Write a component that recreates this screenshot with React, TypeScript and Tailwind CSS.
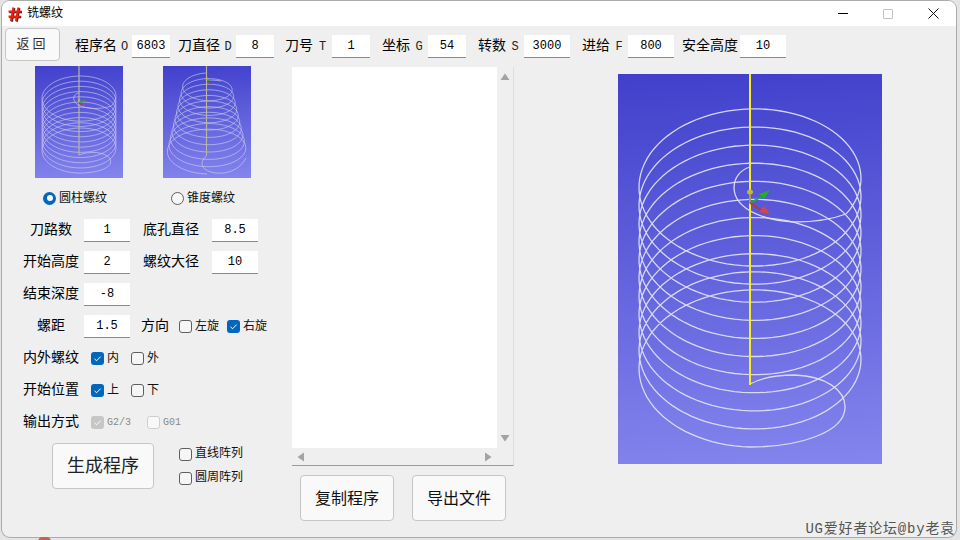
import React from 'react';

const FONT = "font-['Liberation_Mono','Noto_Sans_CJK_SC',monospace]";

// builds the helix polyline, angle in degrees, bottom of the ellipse is 90
const helixPath = (
  cx: number, rBottom: number, rTop: number,
  cyBottom: number, cyTop: number,
  ryBottom: number, ryTop: number,
  startDeg: number, endDeg: number,
) => {
  const pts: string[] = [];
  for (let a = startDeg; a <= endDeg; a += 4) {
    const t = (a - startDeg) / (endDeg - startDeg);
    const r = rBottom + (rTop - rBottom) * t;
    const ry = ryBottom + (ryTop - ryBottom) * t;
    const cy = cyBottom + (cyTop - cyBottom) * t;
    const rad = (a * Math.PI) / 180;
    pts.push(`${(cx + r * Math.cos(rad)).toFixed(2)} ${(cy + ry * Math.sin(rad)).toFixed(2)}`);
  }
  return 'M' + pts.join('L');
};

const cylinderCoil = helixPath(132, 111, 111, 299, 299 - (18.1 * 3900) / 360, 74, 74, 90, 3990);
const coneCoil = helixPath(44, 40, 24, 87, 19, 21, 12, 90, 3870);

const CylinderView = ({ main }: { main?: boolean }) => (
  <svg viewBox="0 0 264 390" preserveAspectRatio="none" className="block h-full w-full">
    <g fill="none" stroke={main ? '#dedef2' : '#cfcff2'} strokeOpacity={main ? 0.95 : 0.7} strokeWidth={main ? 1.3 : 0.9}>
      <path vectorEffect="non-scaling-stroke" d={cylinderCoil} />
      <path vectorEffect="non-scaling-stroke" d="M132 310C147 302 167 301 177 301C207 302 228 316 227 334C226 358 182 373 132 373" />
      <path vectorEffect="non-scaling-stroke" d="M228 140C212 146 192 148 177 148C152 147 117 138 116 114C116 104 122 96 132 93" />
    </g>
    <path vectorEffect="non-scaling-stroke" d="M132 0V118" stroke={main ? '#f6ee14' : '#b8b89c'} strokeWidth={main ? 2 : 1.2} />
    <path vectorEffect="non-scaling-stroke" d="M132 118V129" stroke={main ? '#a8a040' : '#b8b89c'} strokeWidth={main ? 2 : 1.2} />
    <path vectorEffect="non-scaling-stroke" d="M132 129V311" stroke={main ? '#f6ee14' : '#b8b89c'} strokeWidth={main ? 2 : 1.2} />
    <ellipse cx="132" cy="118" rx={main ? 3 : 4} ry={main ? 2.5 : 4} fill="#c8b830" />
    <g fill="none" strokeWidth={main ? 1.8 : 1.2}>
      <path vectorEffect="non-scaling-stroke" d="M132 129L143 123" stroke="#22b022" />
      <path vectorEffect="non-scaling-stroke" d="M132 129L143 136" stroke="#c03535" />
    </g>
    <path d="M141 120L152 116L146 125Z" fill="#22b022" />
    <path d="M141 138L152 140L146 132Z" fill="#d04848" />
  </svg>
);

const ConeView = () => (
  <svg viewBox="0 0 88 112" className="block h-full w-full">
    <g fill="none" stroke="#cfcff2" strokeOpacity="0.7" strokeWidth="0.9">
      <path d={coneCoil} />
      <path d="M43.5 90C37 95 37 103 48 106C58 109 75 107 83 92" />
      <path d="M44 14C48 14 52 14 58 15" />
    </g>
    <path d="M43.5 0V90" stroke="#b8b89c" strokeWidth="1.1" />
    <circle cx="43.5" cy="12" r="1" fill="#c8b830" />
    <path d="M44 15L49 13" stroke="#22b022" strokeWidth="1" />
    <path d="M44 15L48 18" stroke="#c03535" strokeWidth="1" />
  </svg>
);

const Box = ({ value, className }: { value: string; className: string }) => (
  <div className={`flex h-[23px] shrink-0 items-center justify-center border-b border-[#8a8a8a] bg-white text-[12px] text-black ${className}`}>
    {value}
  </div>
);

const Letter = ({ ch, className }: { ch: string; className: string }) => (
  <span className={`shrink-0 text-center text-[12px] text-[#222] ${className}`}>{ch}</span>
);

const Check = ({ on, off }: { on?: boolean; off?: boolean }) => {
  // off = greyed out box
  let cls = 'border border-[#5f5f5f] bg-[#f6f6f6]';
  if (on) cls = 'bg-[#0067c0]';
  if (off) cls = on ? 'bg-[#c6c6c6]' : 'border border-[#cfcfcf] bg-[#f8f8f8]';
  return (
    <span className={`flex h-[13px] w-[13px] shrink-0 items-center justify-center rounded-[3px] ${cls}`}>
      {on && (
        <svg viewBox="0 0 13 13" className="h-[13px] w-[13px]">
          <path d="M3.5 6.8L5.6 8.8L9.6 4.6" fill="none" stroke="#fff" strokeWidth="1" />
        </svg>
      )}
    </span>
  );
};

const Radio = ({ on, className }: { on?: boolean; className?: string }) =>
  on ? (
    <span className={`flex h-[13px] w-[13px] shrink-0 items-center justify-center rounded-full bg-[#0067c0] ${className ?? ''}`}>
      <span className="h-[6px] w-[6px] rounded-full bg-white" />
    </span>
  ) : (
    <span className={`h-[13px] w-[13px] shrink-0 rounded-full border border-[#5f5f5f] bg-[#f6f6f6] ${className ?? ''}`} />
  );

const Label = ({ text, className }: { text: string; className?: string }) => (
  <span className={`w-[56px] shrink-0 text-center text-[14px] leading-[23px] text-black ${className ?? ''}`}>{text}</span>
);

const Opt = ({ text, on, className }: { text: string; on?: boolean; className: string }) => (
  <span className={`flex items-center gap-[3px] text-[12px] text-[#111] ${className}`}>
    <Check on={on} />
    <span>{text}</span>
  </span>
);

const Arrow = ({ d }: { d: string }) => (
  <svg viewBox="0 0 10 10" className="h-[10px] w-[10px]">
    <path d={d} fill="#a3a3a3" />
  </svg>
);

export default function App() {
  return (
    <div className={`relative h-[540px] w-[960px] overflow-hidden bg-[#e4e4e4] pl-[2px] pt-px ${FONT}`}>
      {/* bit of the desktop peeking out under the window */}
      <div className="absolute bottom-[-6px] left-[38px] h-[9px] w-[13px] rounded-full bg-[#c8604a]" />

      <div className="h-[536px] w-[954px] overflow-hidden rounded-[8px] bg-[#efefef] shadow-[0_0_0_1px_#ababab]">
        {/* Title bar */}
        <div className="flex h-[25px] items-center bg-white">
          <svg viewBox="0 0 14 15" className="ml-[6px] h-[16px] w-[14px]">
            <path d="M5.5 1L3 14.5M10.5 1L8 14.5M0.5 5H13.5M0.5 10H12.5" stroke="#222" strokeWidth="2.2" transform="translate(0.8 0.6)" />
            <path d="M5.5 1L3 14.5M10.5 1L8 14.5M0.5 5H13.5M0.5 10H12.5" stroke="#f02010" strokeWidth="2.2" />
          </svg>
          <span className="ml-[5px] text-[12px] text-black">铣螺纹</span>
          <div className="ml-auto flex items-center">
            <span className="mr-[35px] h-px w-[10px] bg-black" />
            <span className="mr-[35px] h-[10px] w-[10px] rounded-[1px] border border-[#c0c0c0]" />
            <svg viewBox="0 0 11 11" className="mr-[17px] h-[11px] w-[11px]">
              <path d="M0.5 0.5L10.5 10.5M10.5 0.5L0.5 10.5" stroke="#111" strokeWidth="1" />
            </svg>
          </div>
        </div>

        {/* Top parameter row */}
        <div className="flex h-[35px] items-start">
          <button className="ml-[3px] mt-[2px] h-[33px] w-[55px] rounded-[4px] border border-[#c6c6c6] bg-[#f9f9f9] text-[13px] tracking-[3px] text-[#333]">
            返回
          </button>
          <div className="ml-[15px] mt-[9px] flex items-center text-[14px] text-black">
            <span className="w-[42px] shrink-0">程序名</span>
            <Letter ch="O" className="w-[15px]" />
            <Box value="6803" className="w-[38px]" />
            <span className="ml-[8px] w-[42px] shrink-0">刀直径</span>
            <Letter ch="D" className="w-[16px]" />
            <Box value="8" className="w-[38px]" />
            <span className="ml-[11px] w-[28px] shrink-0">刀号</span>
            <Letter ch="T" className="w-[19px]" />
            <Box value="1" className="w-[38px]" />
            <span className="ml-[12px] w-[28px] shrink-0">坐标</span>
            <Letter ch="G" className="w-[18px]" />
            <Box value="54" className="w-[38px]" />
            <span className="ml-[12px] w-[28px] shrink-0">转数</span>
            <Letter ch="S" className="w-[18px]" />
            <Box value="3000" className="w-[46px]" />
            <span className="ml-[12px] w-[28px] shrink-0">进给</span>
            <Letter ch="F" className="w-[18px]" />
            <Box value="800" className="w-[46px]" />
            <span className="ml-[8px] w-[56px] shrink-0">安全高度</span>
            <Box value="10" className="ml-[2px] w-[46px]" />
          </div>
        </div>

        <div className="flex">
          {/* Left column */}
          <div className="w-[290px] shrink-0 pt-[5px]">
            <div className="flex pl-[33px]">
              <div className="h-[112px] w-[88px] bg-[linear-gradient(176deg,#4040cc,#8585ee)]">
                <CylinderView />
              </div>
              <div className="ml-[40px] h-[112px] w-[88px] bg-[linear-gradient(176deg,#4040cc,#8585ee)]">
                <ConeView />
              </div>
            </div>

            <div className="mt-[12px] flex h-[16px] items-center pl-[41px] text-[12px] leading-[18px] text-[#111]">
              <Radio on />
              <span className="ml-[3px] w-[48px] pt-px">圆柱螺纹</span>
              <Radio className="ml-[64px]" />
              <span className="ml-[3px] pt-px">锥度螺纹</span>
            </div>

            <div className="mt-[13px] flex flex-col gap-[9px] pl-[21px]">
              <div className="flex h-[23px] items-center">
                <Label text="刀路数" />
                <Box value="1" className="ml-[5px] w-[46px]" />
                <Label text="底孔直径" className="ml-[13px]" />
                <Box value="8.5" className="ml-[13px] w-[46px]" />
              </div>
              <div className="flex h-[23px] items-center">
                <Label text="开始高度" />
                <Box value="2" className="ml-[5px] w-[46px]" />
                <Label text="螺纹大径" className="ml-[13px]" />
                <Box value="10" className="ml-[13px] w-[46px]" />
              </div>
              <div className="flex h-[23px] items-center">
                <Label text="结束深度" />
                <Box value="-8" className="ml-[5px] w-[46px]" />
              </div>
              <div className="flex h-[23px] items-center">
                <Label text="螺距" />
                <Box value="1.5" className="ml-[5px] w-[46px]" />
                <span className="ml-[11px] text-[14px] text-black">方向</span>
                <Opt text="左旋" className="ml-[10px]" />
                <Opt text="右旋" on className="ml-[8px]" />
              </div>
              <div className="flex h-[23px] items-center">
                <Label text="内外螺纹" />
                <Opt text="内" on className="ml-[12px]" />
                <Opt text="外" className="ml-[12px]" />
              </div>
              <div className="flex h-[23px] items-center">
                <Label text="开始位置" />
                <Opt text="上" on className="ml-[12px]" />
                <Opt text="下" className="ml-[12px]" />
              </div>
              <div className="flex h-[23px] items-center">
                <Label text="输出方式" />
                <span className="ml-[12px] flex items-center gap-[3px] text-[10px] text-[#8a8a8a]">
                  <Check on off />
                  G2/3
                </span>
                <span className="ml-[16px] flex items-center gap-[3px] text-[10px] text-[#8a8a8a]">
                  <Check off />
                  G01
                </span>
              </div>
            </div>

            <div className="mt-[9px] flex pl-[50px]">
              <button className="h-[46px] w-[102px] rounded-[4px] border border-[#c6c6c6] bg-[#f9f9f9] pt-[3px] text-[18px] text-[#222]">
                生成程序
              </button>
              <div className="ml-[25px] mt-[3px] flex flex-col gap-[8px]">
                <Opt text="直线阵列" className="h-[16px]" />
                <Opt text="圆周阵列" className="h-[16px]" />
              </div>
            </div>
          </div>

          {/* Program text panel */}
          <div className="mt-[6px] w-[222px] shrink-0">
            <div className="h-[399px] border-b border-r border-b-[#9c9c9c] border-r-[#dedede]">
              <div className="flex h-[381px]">
                <div className="w-[205px] bg-white" />
                <div className="flex flex-1 flex-col items-center justify-between py-[5px]">
                  <Arrow d="M5 1.5L9.5 8H0.5Z" />
                  <Arrow d="M5 8.5L9.5 2H0.5Z" />
                </div>
              </div>
              <div className="flex h-[17px] w-[205px] items-center justify-between px-[4px]">
                <Arrow d="M1.5 5L8 0.5V9.5Z" />
                <Arrow d="M8.5 5L2 0.5V9.5Z" />
              </div>
            </div>
            <div className="mt-[9px] flex gap-[18px] pl-[8px]">
              <button className="h-[46px] w-[94px] rounded-[4px] border border-[#c6c6c6] bg-[#f9f9f9] pt-[3px] text-[16px] text-[#111]">
                复制程序
              </button>
              <button className="h-[46px] w-[94px] rounded-[4px] border border-[#c6c6c6] bg-[#f9f9f9] pt-[3px] text-[16px] text-[#111]">
                导出文件
              </button>
            </div>
          </div>

          {/* Toolpath preview */}
          <div className="ml-[104px] mt-[13px] h-[390px] w-[264px] shrink-0 bg-[linear-gradient(176deg,#4040cc,#8585ee)]">
            <CylinderView main />
          </div>
        </div>
      </div>

      {/* watermark sits over the window corner */}
      <div className="absolute bottom-[2px] right-[5px] text-[14px] leading-[18px] tracking-[0.8px] text-[#555]">
        UG爱好者论坛@by老袁
      </div>
    </div>
  );
}
